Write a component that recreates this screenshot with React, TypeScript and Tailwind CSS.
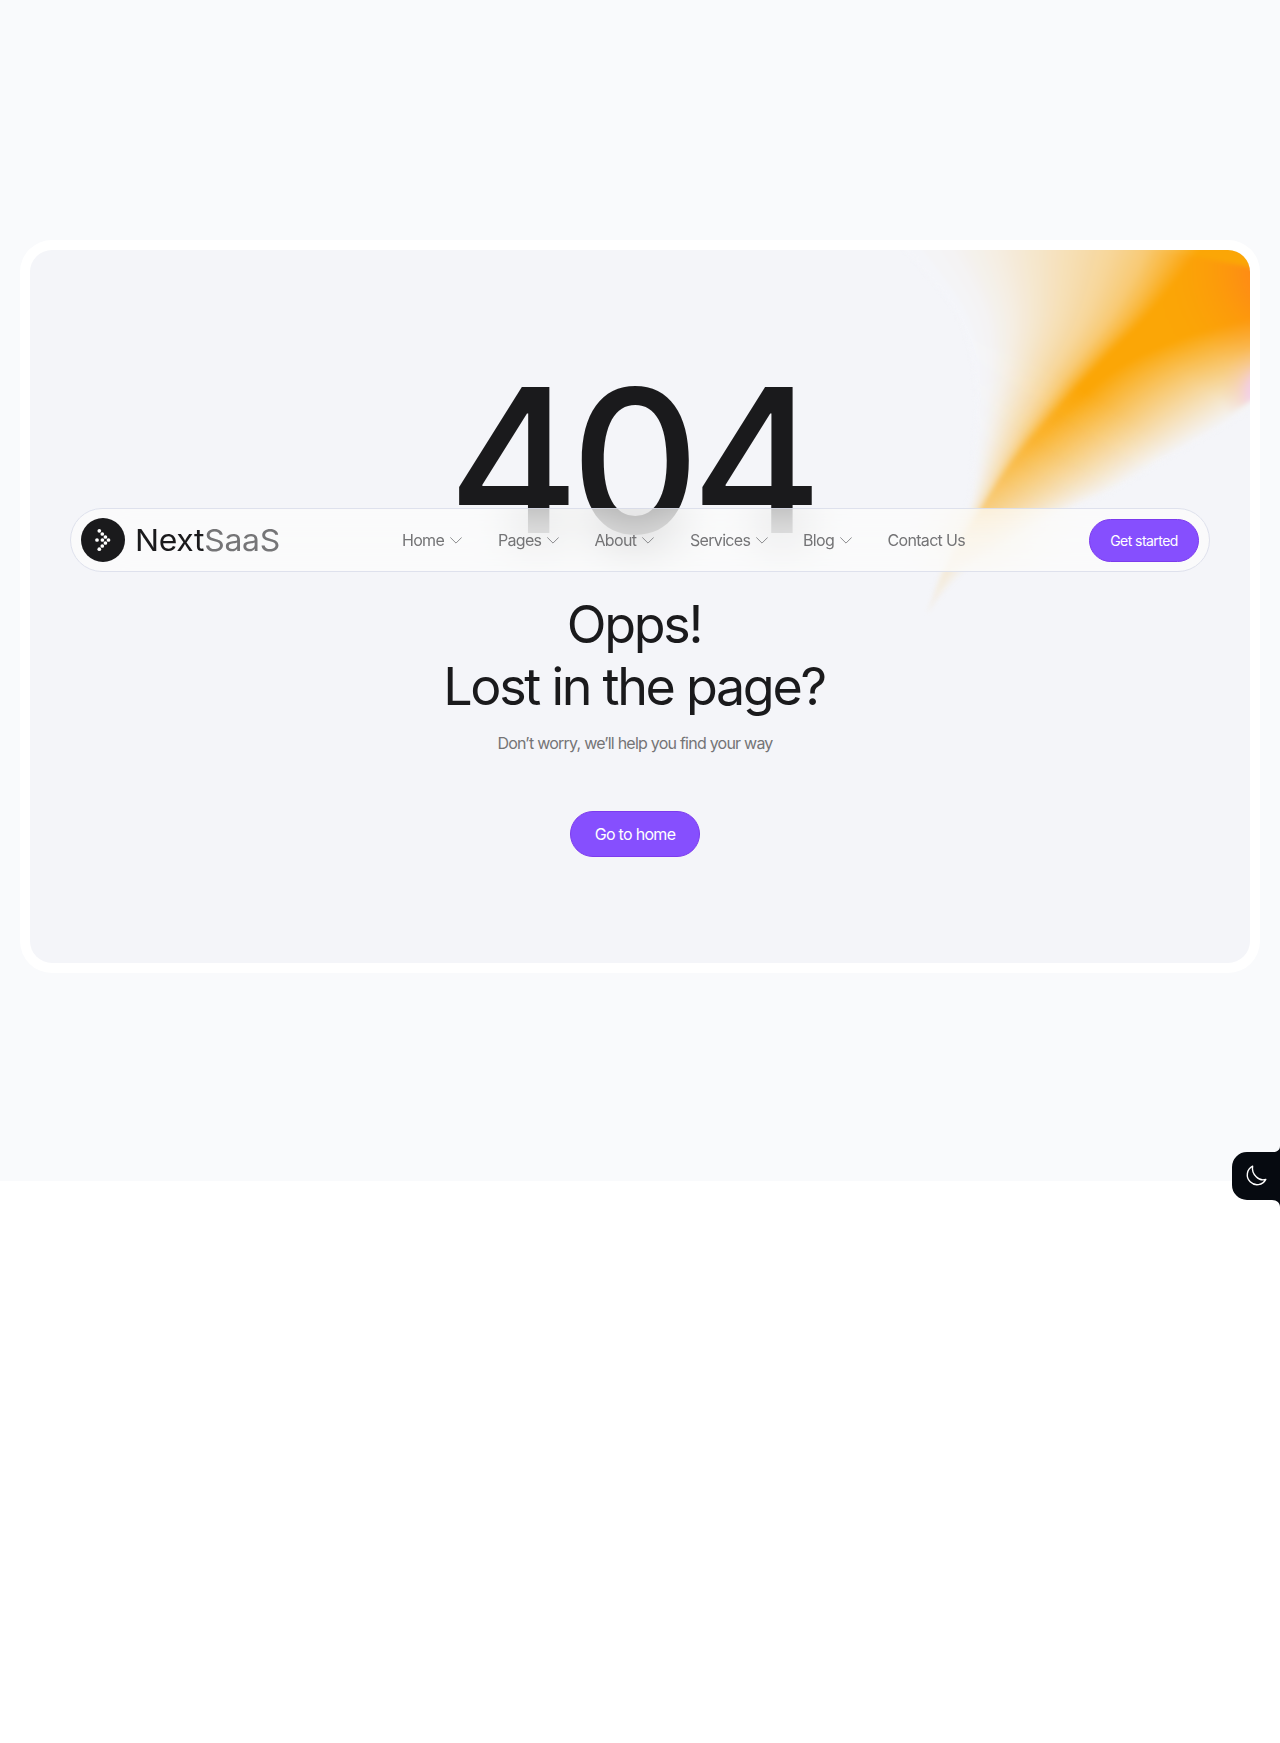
import React from "react";

type Pt = [number, number];

// Control curves of the light beam: left edge, spine, inner right edge, outer right edge.
const LEFT: Pt[] = [[926, 614], [941, 562], [966, 508], [973, 455], [976, 400], [970, 350], [951, 305], [905, 250], [868, 210]];
const SPINE: Pt[] = [[928, 612], [950, 562], [983, 508], [1013, 463], [1049, 420], [1104, 360], [1149, 314], [1200, 250], [1230, 205]];
const INNER: Pt[] = [[928, 612], [951, 563], [985, 509], [1017, 464], [1056, 422], [1115, 370], [1185, 337], [1290, 302], [1340, 240]];
const OUTER: Pt[] = [[928, 612], [980, 560], [1070, 510], [1115, 490], [1165, 460], [1218, 430], [1262, 402], [1340, 352], [1400, 300]];

// Distance from the left edge (0) to the spine (1) at which each strength is reached.
const RAMP: Pt[] = [[0, 0], [0.03, 0.16], [0.1, 0.31], [0.2, 0.45], [0.3, 0.58], [0.4, 0.7], [0.55, 0.82], [0.75, 0.91], [0.92, 0.97], [1, 1]];

function ramp(a: number): number {
  for (let i = 1; i < RAMP.length; i++) {
    if (a <= RAMP[i][0]) {
      const [a0, u0] = RAMP[i - 1];
      const [a1, u1] = RAMP[i];
      return u0 + ((u1 - u0) * (a - a0)) / (a1 - a0);
    }
  }
  return 1;
}

const mix = (a: Pt, b: Pt, k: number): Pt => [a[0] + (b[0] - a[0]) * k, a[1] + (b[1] - a[1]) * k];

function curve(pts: Pt[]): string {
  let d = "";
  for (let i = 0; i < pts.length - 1; i++) {
    const p0 = pts[Math.max(0, i - 1)];
    const p1 = pts[i];
    const p2 = pts[i + 1];
    const p3 = pts[Math.min(pts.length - 1, i + 2)];
    const c1 = [p1[0] + (p2[0] - p0[0]) / 6, p1[1] + (p2[1] - p0[1]) / 6];
    const c2 = [p2[0] - (p3[0] - p1[0]) / 6, p2[1] - (p3[1] - p1[1]) / 6];
    d += `C${c1[0].toFixed(1)} ${c1[1].toFixed(1)} ${c2[0].toFixed(1)} ${c2[1].toFixed(1)} ${p2[0].toFixed(1)} ${p2[1].toFixed(1)}`;
  }
  return d;
}

const STEPS = 90;
const layers = Array.from({ length: STEPS }, (_, i) => {
  const a = i / (STEPS - 1);
  const left = LEFT.map((p, n) => mix(SPINE[n], p, 1 - ramp(a)));
  const right = OUTER.map((p, n) => mix(INNER[n], p, 1 - Math.pow(a, 0.9))).reverse();
  const c = [244 + (251 - 244) * a, 245 + (166 - 245) * a, 249 + (6 - 249) * a].map(Math.round);
  return {
    d: `M${left[0][0]} ${left[0][1]}${curve(left)}L${right[0][0]} ${right[0][1]}${curve(right)}Z`,
    fill: `rgb(${c[0]},${c[1]},${c[2]})`,
  };
});

function Beam() {
  return (
    <svg className="absolute top-0 right-0" width="350" height="380" viewBox="900 250 350 380">
      <defs>
        <linearGradient id="tail" gradientUnits="userSpaceOnUse" x1="928" y1="612" x2="1075" y2="385">
          <stop offset="0" stopColor="#fff" stopOpacity="0.05" />
          <stop offset="0.2" stopColor="#fff" stopOpacity="0.16" />
          <stop offset="0.43" stopColor="#fff" stopOpacity="0.5" />
          <stop offset="0.75" stopColor="#fff" stopOpacity="0.82" />
          <stop offset="1" stopColor="#fff" />
        </linearGradient>
        <mask id="fade" maskUnits="userSpaceOnUse" x="850" y="200" width="600" height="450">
          <rect x="850" y="200" width="600" height="450" fill="url(#tail)" />
        </mask>
        <radialGradient id="ember" gradientUnits="userSpaceOnUse" cx="1290" cy="268" r="150">
          <stop offset="0" stopColor="#ff8020" stopOpacity="0.95" />
          <stop offset="0.3" stopColor="#ff8419" stopOpacity="0.7" />
          <stop offset="0.5" stopColor="#ff8a12" stopOpacity="0.38" />
          <stop offset="0.75" stopColor="#fd980a" stopOpacity="0.14" />
          <stop offset="1" stopColor="#fba606" stopOpacity="0" />
        </radialGradient>
        <radialGradient id="pink" gradientUnits="userSpaceOnUse" cx="1266" cy="390" r="46">
          <stop offset="0" stopColor="#f3c8f2" />
          <stop offset="0.4" stopColor="#f3c9ea" stopOpacity="0.7" />
          <stop offset="0.7" stopColor="#f6c4b8" stopOpacity="0.25" />
          <stop offset="1" stopColor="#f6c0a0" stopOpacity="0" />
        </radialGradient>
        <filter id="soft" filterUnits="userSpaceOnUse" x="850" y="200" width="600" height="450" colorInterpolationFilters="sRGB">
          <feGaussianBlur stdDeviation="2" />
        </filter>
        <clipPath id="body"><path d={layers[5].d} /></clipPath>
      </defs>
      <g mask="url(#fade)">
        <g filter="url(#soft)">
          {layers.map((l, i) => <path key={i} d={l.d} fill={l.fill} />)}
          <g clipPath="url(#body)">
            <circle cx="1290" cy="268" r="150" fill="url(#ember)" />
            <circle cx="1266" cy="390" r="46" fill="url(#pink)" />
          </g>
        </g>
      </g>
    </svg>
  );
}

const DOTS: Pt[] = [[39.3, 30.8], [42.3, 34], [45.4, 37], [48.5, 40], [45.4, 43], [42.3, 46], [39.3, 49.2], [37, 40], [42.4, 40]];

function Logo() {
  return (
    <a className="flex items-center">
      <svg width="44" height="44" viewBox="21 18 44 44">
        <circle cx="43" cy="40" r="22" fill="#1a1a1c" />
        {DOTS.map(([x, y], i) => <circle key={i} cx={x} cy={y} r="1.85" fill="#fff" />)}
      </svg>
      <span className="ml-[10px] origin-left scale-x-[1.065] text-[30px] leading-none tracking-[-0.3px] text-[#1a1a1c]">
        Next<span className="text-[#757577]">SaaS</span>
      </span>
    </a>
  );
}

function Chevron() {
  return (
    <svg className="ml-[6px] mt-px" width="12" height="7" viewBox="0 0 12 7" fill="none">
      <path d="M0.6 0.7L6 6.1L11.4 0.7" stroke="#8c8c8f" strokeWidth="1" strokeLinecap="round" />
    </svg>
  );
}

const NAV = [
  { label: "Home", w: "w-[96px]", menu: true },
  { label: "Pages", w: "w-[96.5px]", menu: true },
  { label: "About", w: "w-[95.5px]", menu: true },
  { label: "Services", w: "w-[113px]", menu: true },
  { label: "Blog", w: "w-[84.5px]", menu: true },
  { label: "Contact Us", w: "w-[90px]", menu: false },
];

function Header() {
  return (
    <header className="absolute top-[508px] left-[70px] h-16 w-[1140px]">
      <div className="absolute inset-0 rounded-full border border-[#dcdfeb] bg-[#fcfcfb]/70 opacity-90 backdrop-blur-[25px]" />
      <div className="relative flex h-full items-center pr-[11px] pl-[11px]">
        <Logo />
        <nav className="absolute left-[332px] flex items-center">
          {NAV.map((n) => (
            <a key={n.label} className={`flex items-center text-[16px] leading-6 tracking-[-0.68px] whitespace-nowrap text-[#747476] ${n.w}`}>
              {n.label}
              {n.menu && <Chevron />}
            </a>
          ))}
        </nav>
        <a className="ml-auto flex h-[43px] w-[110px] items-center justify-center rounded-full border border-[#7c3bed] bg-[#864ffe] text-[14px] tracking-[-0.55px] text-white">
          Get started
        </a>
      </div>
    </header>
  );
}

function ThemeToggle() {
  return (
    <button className="absolute top-[1146px] right-0 h-[62px] w-12">
      <svg width="48" height="62" viewBox="0 0 48 62">
        <path d="M48 0C48 4 45 6 41 6H15A15 15 0 0 0 0 21V39A15 15 0 0 0 15 54H40C45 54 48 57 48 61Z" fill="#060a10" />
        <path d="M20.6 19.6A9.8 9.8 0 1 0 33.8 32.8C31.8 33.4 27.5 33.6 24.2 30.1C20.5 26.7 20.1 22.6 20.6 19.6Z" transform="translate(0 0.6)" fill="none" stroke="#fff" strokeWidth="1.4" strokeLinejoin="round" />
      </svg>
    </button>
  );
}

export default function App() {
  return (
    <div className="relative h-[1743px] overflow-hidden bg-white font-['Inter',sans-serif]">
      <main className="h-[1181px] bg-[#f9fafc] px-5 pt-[240px]">
        <section className="h-[733px] rounded-[32px] bg-white p-[10px]">
          <div className="relative flex h-full flex-col items-center overflow-hidden rounded-[22px] bg-[#f4f5f9] pt-[110px] pr-[10px] text-center">
            <Beam />
            <h1 className="relative mr-[8px] text-[200px] leading-[200px] font-medium tracking-[-8.6px] text-[#1a1a1c]">404</h1>
            <h2 className="relative mt-[34px] mr-[2px] text-[52px] leading-[62.4px] tracking-[-2.3px] text-[#1a1a1c]">
              Opps!
              <br />
              Lost in the page?
            </h2>
            <p className="relative mt-[12px] text-[16px] leading-6 tracking-[-0.77px] text-[#747476]">Don’t worry, we’ll help you find your way</p>
            <a className="relative mt-14 flex h-[46px] w-[130px] items-center justify-center rounded-full border border-[#7c3bed] bg-[#864ffe] text-[16px] tracking-[-0.7px] text-white">
              Go to home
            </a>
          </div>
        </section>
      </main>
      <Header />
      <ThemeToggle />
    </div>
  );
}
